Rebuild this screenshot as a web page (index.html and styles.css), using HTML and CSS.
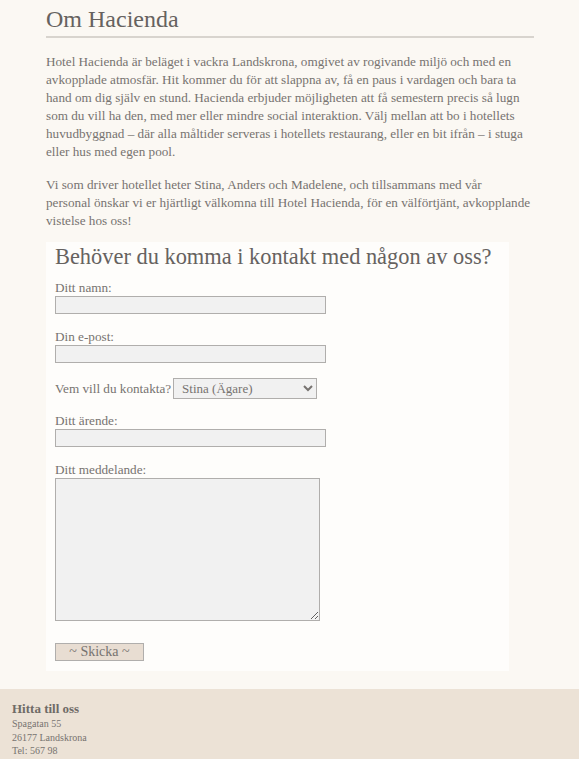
FILE: index.html
```html
<!DOCTYPE html>
<html lang="sv">
<head>
<meta charset="utf-8">
<title>Om Hacienda</title>
<link rel="stylesheet" href="styles.css">
</head>
<body>
<main class="content">
  <h1 class="page-title">Om Hacienda</h1>
  <p class="text">Hotel Hacienda är beläget i vackra Landskrona, omgivet av rogivande miljö och med en avkopplade atmosfär. Hit kommer du för att slappna av, få en paus i vardagen och bara ta hand om dig själv en stund. Hacienda erbjuder möjligheten att få semestern precis så lugn som du vill ha den, med mer eller mindre social interaktion. Välj mellan att bo i hotellets huvudbyggnad – där alla måltider serveras i hotellets restaurang, eller en bit ifrån – i stuga eller hus med egen pool.</p>
  <p class="text">Vi som driver hotellet heter Stina, Anders och Madelene, och tillsammans med vår<br>personal önskar vi er hjärtligt välkomna till Hotel Hacienda, för en välförtjänt, avkopplande<br>vistelse hos oss!</p>

  <form class="contact">
    <h2 class="contact-title">Behöver du komma i kontakt med någon av oss?</h2>
    <div class="field">
      <label class="label" for="namn">Ditt namn:</label>
      <input class="input" id="namn" type="text">
    </div>
    <div class="field">
      <label class="label" for="epost">Din e-post:</label>
      <input class="input" id="epost" type="text">
    </div>
    <div class="field field-inline">
      <label class="label" for="vem">Vem vill du kontakta?</label>
      <select class="select" id="vem">
        <option>Stina (Ägare)</option>
        <option>Anders</option>
        <option>Madelene</option>
      </select>
    </div>
    <div class="field">
      <label class="label" for="arende">Ditt ärende:</label>
      <input class="input" id="arende" type="text">
    </div>
    <div class="field">
      <label class="label" for="medd">Ditt meddelande:</label>
      <textarea class="textarea" id="medd"></textarea>
    </div>
    <button class="submit" type="button">~ Skicka ~</button>
  </form>
</main>
<footer class="footer">
  <h3 class="footer-title">Hitta till oss</h3>
  <p class="footer-line">Spagatan 55</p>
  <p class="footer-line">26177 Landskrona</p>
  <p class="footer-line">Tel: 567 98</p>
</footer>
</body>
</html>
```

FILE: styles.css
```css
html, body {
  margin: 0;
  padding: 0;
}
body {
  background: #fbf8f3;
  color: #777370;
  font-family: "Liberation Serif", "Times New Roman", serif;
  font-size: 13.2px;
}
.content {
  width: 488px;
  margin: 0 auto;
  padding-left: 1px;
}
.page-title {
  margin: 0;
  padding: 5px 0 3px;
  font-family: "Liberation Serif", serif;
  font-weight: normal;
  font-size: 24px;
  line-height: 28px;
  color: #66625f;
  border-bottom: 2px solid #d8d4ce;
}
.text {
  margin: 15px 0 0;
  line-height: 18px;
}
.contact {
  margin: 12px 0 0;
  width: 463px;
  box-sizing: border-box;
  background: #fefdfb;
  padding: 2px 9px 10px;
}
.contact-title {
  margin: 0 0 10px;
  font-weight: normal;
  font-size: 22.4px;
  line-height: 26px;
  color: #66625f;
  white-space: nowrap;
}
.field {
  display: flex;
  flex-direction: column;
  align-items: flex-start;
  margin-bottom: 15px;
}
.field-inline {
  flex-direction: row;
  align-items: center;
  gap: 2px;
  margin-bottom: 14px;
}
.label {
  line-height: 16px;
}
.input {
  width: 271px;
  height: 18px;
  box-sizing: border-box;
  margin: 0;
  border: 1px solid #b0aeac;
  background: #f1f1f1;
}
.select {
  width: 144px;
  height: 21px;
  box-sizing: border-box;
  margin: 0;
  border: 1px solid #b0aeac;
  background: #f1f1f1;
  color: #777370;
  font-family: inherit;
  font-size: 13px;
  padding: 0 4px;
}
.textarea {
  width: 265px;
  height: 143px;
  box-sizing: border-box;
  margin: 0;
  border: 1px solid #b0aeac;
  background: #f1f1f1;
  resize: vertical;
}
.submit {
  display: block;
  margin-top: 22px;
  width: 89px;
  height: 18px;
  box-sizing: border-box;
  border: 1px solid #b0aeac;
  background: #e8ddd2;
  color: #777370;
  font-family: inherit;
  font-size: 14px;
  line-height: 14px;
  padding: 0;
}
.footer {
  margin-top: 18px;
  background: #ece2d6;
  padding: 12px 12px 8px;
}
.footer-title {
  margin: 0;
  font-size: 13px;
  line-height: 16px;
  font-weight: bold;
  color: #6f6b67;
}
.footer-line {
  margin: 0;
  font-size: 10px;
  line-height: 13.5px;
}
```
